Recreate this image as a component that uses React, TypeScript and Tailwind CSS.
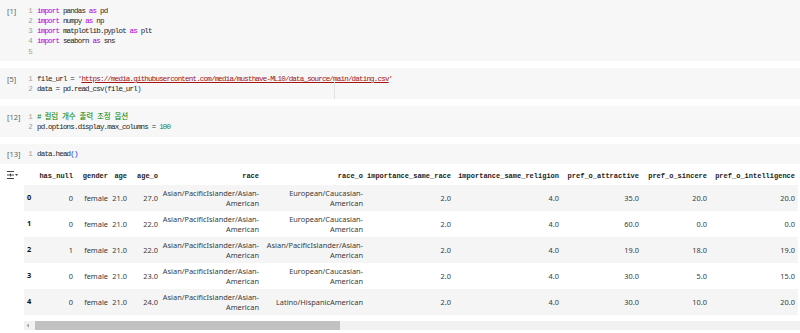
import React from 'react';

type Node = React.ReactNode;

const Kw = ({ children }: { children: Node }) => <span className="text-[#af00db]">{children}</span>;
const Br = ({ children }: { children: Node }) => <span className="text-[#0431fa]">{children}</span>;
const Ko = ({ children }: { children: Node }) => <span className="tracking-normal">{children}</span>;

function CodeCell({ n, lines }: { n: number; lines: Node[] }) {
  return (
    <div className="relative flex bg-[#f7f7f7] pt-[5.5px] pb-[4.5px]">
      <div className="w-[25px] pl-[7px] font-['Noto_Sans',sans-serif] text-[7.5px] leading-[10.3px] text-[#616161]">
        [{n}]
      </div>
      <div className="font-['Liberation_Mono','Noto_Sans_CJK_KR',monospace] text-[7.5px] tracking-[-0.8px] text-[#1f1f1f]">
        {lines.map((line, i) => (
          <div key={i} className="flex h-[10.3px] items-center leading-[10.3px]">
            <span className="w-[7px] text-right text-[#9e9e9e]">{i + 1}</span>
            <span className="ml-[5px] whitespace-pre">{line}</span>
          </div>
        ))}
      </div>
    </div>
  );
}

const cols = [
  { key: 'has_null', w: 38 },
  { key: 'gender', w: 35 },
  { key: 'age', w: 19 },
  { key: 'age_o', w: 31 },
  { key: 'race', w: 101 },
  { key: 'race_o', w: 104 },
  { key: 'importance_same_race', w: 88 },
  { key: 'importance_same_religion', w: 108 },
  { key: 'pref_o_attractive', w: 80 },
  { key: 'pref_o_sincere', w: 68 },
  { key: 'pref_o_intelligence', w: 88 },
];

const api = 'Asian/PacificIslander/Asian-American';
const euro = 'European/Caucasian-American';

const rows = [
  ['0', 'female', '21.0', '27.0', api, euro, '2.0', '4.0', '35.0', '20.0', '20.0'],
  ['0', 'female', '21.0', '22.0', api, euro, '2.0', '4.0', '60.0', '0.0', '0.0'],
  ['1', 'female', '21.0', '22.0', api, api, '2.0', '4.0', '19.0', '18.0', '19.0'],
  ['0', 'female', '21.0', '23.0', api, euro, '2.0', '4.0', '30.0', '5.0', '15.0'],
  ['0', 'female', '21.0', '24.0', api, 'Latino/HispanicAmerican', '2.0', '4.0', '30.0', '10.0', '20.0'],
];

function OutputIcon() {
  return (
    <svg width="11" height="8" viewBox="0 0 11 8" className="text-[#444]">
      <path d="M0 0.5H7M0 4H7M0 7.5H7" stroke="currentColor" strokeWidth="1" />
      <path d="M3.5 2.5V5.5" stroke="currentColor" strokeWidth="1" />
      <path d="M8 3L11 3L9.5 5Z" fill="currentColor" />
    </svg>
  );
}

export default function App() {
  return (
    <div className="h-[333px] w-[800px] overflow-hidden bg-white">
      <CodeCell
        n={1}
        lines={[
          <><Kw>import</Kw> pandas <Kw>as</Kw> pd</>,
          <><Kw>import</Kw> numpy <Kw>as</Kw> np</>,
          <><Kw>import</Kw> matplotlib.pyplot <Kw>as</Kw> plt</>,
          <><Kw>import</Kw> seaborn <Kw>as</Kw> sns</>,
          '',
        ]}
      />
      <div className="mt-[7px]">
        <div className="relative">
          <CodeCell
            n={5}
            lines={[
              <>
                file_url = <span className="text-[#a31515]">'<span className="underline">https://media.githubusercontent.com/media/musthave-ML10/data_source/main/dating.csv</span>'</span>
              </>,
              <>data = pd.read_csv<Br>(</Br>file_url<Br>)</Br></>,
            ]}
          />
          {/* 80 column ruler */}
          <div className="absolute left-[334px] top-[14px] h-[17px] w-px bg-[#e3e3e3]" />
        </div>
      </div>
      <div className="mt-[7px]">
        <CodeCell
          n={12}
          lines={[
            <span className="text-[#008000]">
              # <Ko>컬럼</Ko> <Ko>개수</Ko> <Ko>출력</Ko> <Ko>조정</Ko> <Ko>옵션</Ko>
            </span>,
            <>pd.options.display.max_columns = <span className="text-[#098658]">100</span></>,
          ]}
        />
      </div>
      <div className="mt-[7px]">
        <CodeCell n={13} lines={[<>data.head<Br>()</Br></>]} />
      </div>

      {/* output */}
      <div className="relative mt-[3px] flex">
        <div className="w-[24px] shrink-0 pl-[7px] pt-[4px]">
          <OutputIcon />
        </div>
        <div className="w-[776px] overflow-hidden">
          <table className="w-[774px] table-fixed border-collapse font-['Noto_Sans',sans-serif] text-[7.4px] text-[#3a3a3a]">
            <colgroup>
              <col className="w-[14px]" />
              {cols.map((c) => (
                <col key={c.key} style={{ width: c.w }} />
              ))}
            </colgroup>
            <thead>
              <tr className="h-[18px]">
                <th />
                {cols.map((c) => (
                  <th
                    key={c.key}
                    className="whitespace-nowrap pr-[3px] text-right font-['Liberation_Mono',monospace] text-[7px] font-bold text-[#222]"
                  >
                    {c.key}
                  </th>
                ))}
              </tr>
            </thead>
            <tbody>
              {rows.map((r, i) => (
                <tr key={i} className={`h-[26px] ${i % 2 === 0 ? 'bg-[#f5f5f5]' : 'bg-white'}`}>
                  <th className="pl-[3px] text-left font-bold text-[#111]">{i}</th>
                  {r.map((v, j) => (
                    <td key={j} className="pr-[3px] text-right leading-[10px]">
                      {v}
                    </td>
                  ))}
                </tr>
              ))}
            </tbody>
          </table>
          {/* horizontal scrollbar */}
          <div className="mt-[6px] flex h-[9px] items-center bg-[#f1f1f1]">
            <svg width="11" height="9" viewBox="0 0 11 9" className="shrink-0">
              <path d="M5 2.5L2.5 4.5L5 6.5Z" fill="#a3a3a3" />
            </svg>
            <div className="h-[9px] w-[305px] bg-[#c1c1c1]" />
          </div>
        </div>
      </div>
    </div>
  );
}
